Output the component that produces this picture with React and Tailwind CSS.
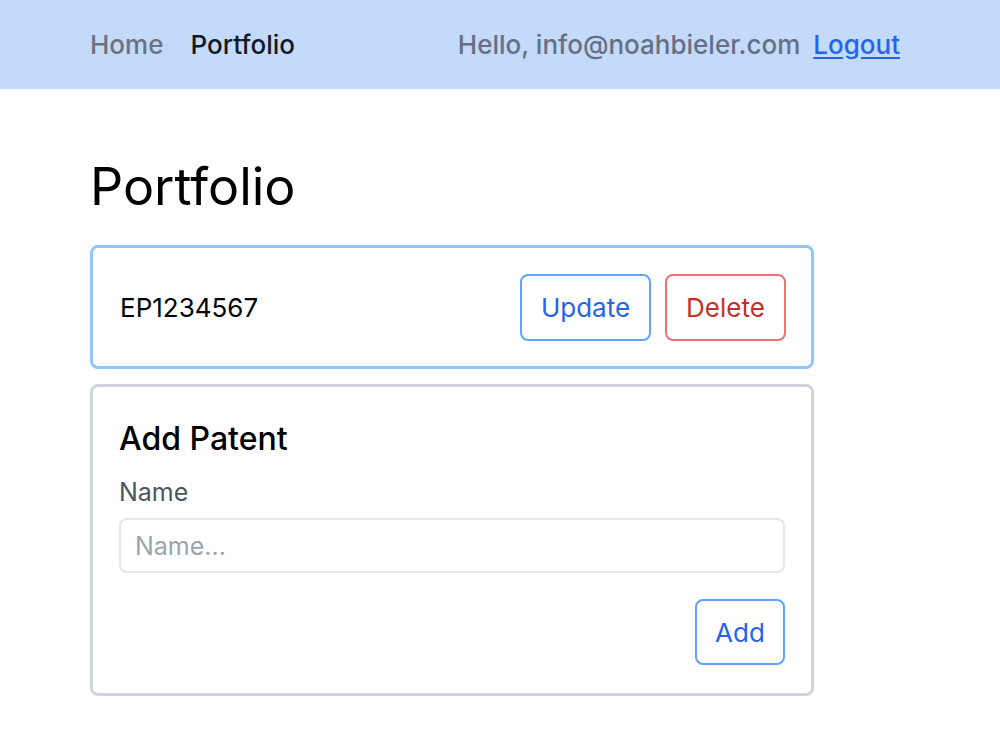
import { useState } from 'react'

export default function App() {
  const [name, setName] = useState('')

  return (
    <div className="min-h-screen bg-white text-black" style={{ fontFamily: 'Inter, "Noto Sans", sans-serif' }}>
      <header className="h-[89px] bg-[#c3dafa]">
        <nav className="w-[810px] ml-[90px] h-full flex items-center justify-between text-[26px] font-medium">
          <div className="flex items-center gap-[27px]">
            <a className="text-[#6b7280]">Home</a>
            <a className="text-[#111827]">Portfolio</a>
          </div>
          <div className="flex items-center gap-[13px]">
            <span className="text-[#667085]">Hello, info@noahbieler.com</span>
            <a className="text-[#2563eb] underline underline-offset-[3px]">Logout</a>
          </div>
        </nav>
      </header>

      <main className="w-[724px] ml-[90px] pt-[62px]">
        <h1 className="text-[52px] leading-[72px] font-normal mb-[22px]">Portfolio</h1>

        <div className="flex flex-col gap-[15px]">
          <div className="border-[3px] border-[#93c5fd] rounded-[8px] h-[124px] pl-[27px] pr-[25px] flex items-center justify-between">
            <span className="text-[26px]">EP1234567</span>
            <div className="flex gap-[14px]">
              <button className="h-[67px] w-[131px] rounded-[8px] border-2 border-[#60a5fa] text-[#2563eb] text-[26px]">Update</button>
              <button className="h-[67px] w-[121px] rounded-[8px] border-2 border-[#ef7373] text-[#c62f2c] text-[26px]">Delete</button>
            </div>
          </div>

          <div className="border-[3px] border-[#d1d5db] rounded-[8px] pt-[30px] pb-[28px] px-[26px]">
            <h2 className="text-[32px] font-medium leading-[44px]">Add Patent</h2>
            <label className="block mt-[15px] text-[25px] text-[#4b5563] leading-[32px]">Name</label>
            <input
              value={name}
              onChange={e => setName(e.target.value)}
              placeholder="Name..."
              className="mt-[10px] w-full h-[55px] border-2 border-[#e5e7eb] rounded-[8px] px-[14px] text-[25px] placeholder:text-[#9ca3af] outline-none"
            />
            <div className="flex justify-end mt-[26px]">
              <button className="h-[66px] w-[90px] rounded-[8px] border-2 border-[#60a5fa] text-[#2563eb] text-[26px]">Add</button>
            </div>
          </div>
        </div>
      </main>
    </div>
  )
}
